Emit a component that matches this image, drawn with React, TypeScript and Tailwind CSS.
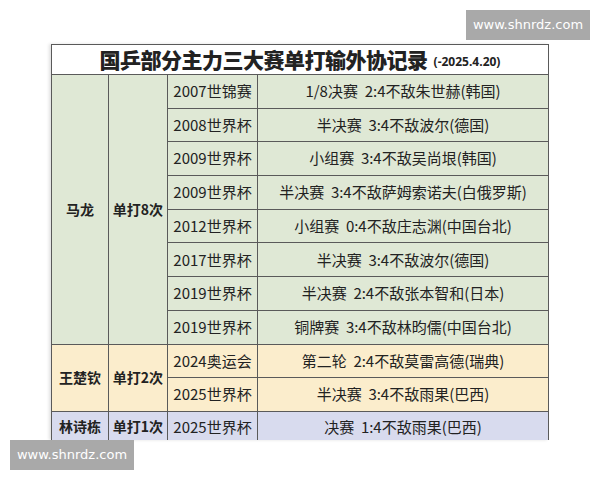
import React from 'react';

type Row = { event: string; result: string };

const groups: {
    name: string;
    count: string;
    bg: string;
    rows: Row[];
}[] = [
    {
        name: '马龙',
        count: '单打8次',
        bg: 'bg-[#dfe8d5]',
        rows: [
            { event: '2007世锦赛', result: '1/8决赛  2:4不敌朱世赫(韩国)' },
            { event: '2008世界杯', result: '半决赛  3:4不敌波尔(德国)' },
            { event: '2009世界杯', result: '小组赛  3:4不敌吴尚垠(韩国)' },
            { event: '2009世界杯', result: '半决赛  3:4不敌萨姆索诺夫(白俄罗斯)' },
            { event: '2012世界杯', result: '小组赛  0:4不敌庄志渊(中国台北)' },
            { event: '2017世界杯', result: '半决赛  3:4不敌波尔(德国)' },
            { event: '2019世界杯', result: '半决赛  2:4不敌张本智和(日本)' },
            { event: '2019世界杯', result: '铜牌赛  3:4不敌林昀儒(中国台北)' },
        ],
    },
    {
        name: '王楚钦',
        count: '单打2次',
        bg: 'bg-[#fbedcc]',
        rows: [
            { event: '2024奥运会', result: '第二轮  2:4不敌莫雷高德(瑞典)' },
            { event: '2025世界杯', result: '半决赛  3:4不敌雨果(巴西)' },
        ],
    },
    {
        name: '林诗栋',
        count: '单打1次',
        bg: 'bg-[#d8dbee]',
        rows: [{ event: '2025世界杯', result: '决赛  1:4不敌雨果(巴西)' }],
    },
];

const font = "font-['Noto_Sans_CJK_SC','Noto_Sans',sans-serif]";

export default function App() {
    return (
        <div className={`relative w-[600px] h-[480px] bg-white overflow-hidden ${font} text-[#222]`}>
            {/* Table */}
            <div className="pt-[44px] pl-[51px]">
                <div className="w-[498px] h-[396px] overflow-hidden bg-[#5a5a5a] p-px pb-0 shadow-[-2px_0_3px_rgba(0,0,0,0.12)]">
                    <div className="grid grid-cols-[56px_58px_89px_290px] grid-rows-[29px_repeat(10,32.7px)_30px] gap-px">
                        {/* Title */}
                        <div className="col-span-4 bg-white flex items-center justify-center gap-1.5">
                            <span className="text-[21px] font-black leading-none tracking-[-0.5px]">
                                国乒部分主力三大赛单打输外协记录
                            </span>
                            <span className="text-[12px] font-bold leading-none font-['Open_Sans',sans-serif] mt-1">
                                (-2025.4.20)
                            </span>
                        </div>

                        {groups.map((g) => (
                            <React.Fragment key={g.name}>
                                <div
                                    className={`${g.bg} flex items-center justify-center text-[14px] font-bold`}
                                    style={{ gridRow: `span ${g.rows.length}` }}
                                >
                                    {g.name}
                                </div>
                                <div
                                    className={`${g.bg} flex items-center justify-center text-[14px] font-bold`}
                                    style={{ gridRow: `span ${g.rows.length}` }}
                                >
                                    {g.count}
                                </div>
                                {g.rows.map((r, i) => (
                                    <React.Fragment key={i}>
                                        <div className={`${g.bg} col-start-3 flex items-center justify-center text-[15px]`}>
                                            {r.event}
                                        </div>
                                        <div className={`${g.bg} col-start-4 flex items-center justify-center text-[15px] whitespace-pre`}>
                                            {r.result}
                                        </div>
                                    </React.Fragment>
                                ))}
                            </React.Fragment>
                        ))}
                    </div>
                </div>
            </div>

            {/* Site watermarks */}
            <div className="absolute left-[466px] top-[10px] w-[124px] h-[30px] bg-[#a9a9a9] flex items-center justify-center text-white text-[13px] font-['DejaVu_Sans',sans-serif]">
                www.shnrdz.com
            </div>
            <div className="absolute left-[10px] top-[440px] w-[124px] h-[30px] bg-[#a9a9a9] flex items-center justify-center text-white text-[13px] font-['DejaVu_Sans',sans-serif]">
                www.shnrdz.com
            </div>
        </div>
    );
}
